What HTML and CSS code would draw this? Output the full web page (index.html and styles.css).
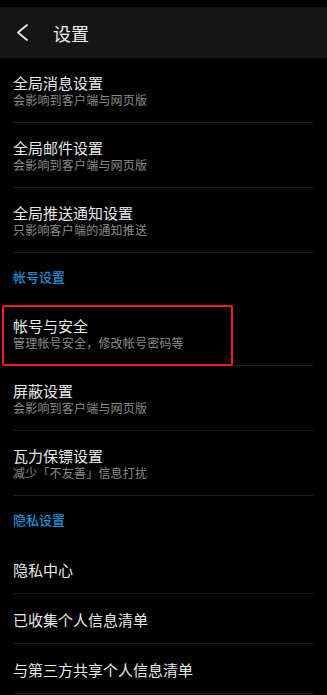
FILE: index.html
```html
<!DOCTYPE html>
<html lang="zh-CN">
<head>
<meta charset="utf-8">
<title>设置</title>
<link rel="stylesheet" href="styles.css">
</head>
<body>
<div class="statusbar"></div>
<header class="header">
  <svg class="back" width="14" height="20" viewBox="0 0 14 20"><polyline points="11,2 2,9.5 11,17" fill="none" stroke="#e6e6e6" stroke-width="1.8" stroke-linecap="round" stroke-linejoin="round"/></svg>
  <span class="title">设置</span>
</header>
<main class="list">
  <div class="item">
    <div class="item-title">全局消息设置</div>
    <div class="item-sub">会影响到客户端与网页版</div>
  </div>
  <div class="item">
    <div class="item-title">全局邮件设置</div>
    <div class="item-sub">会影响到客户端与网页版</div>
  </div>
  <div class="item">
    <div class="item-title">全局推送通知设置</div>
    <div class="item-sub">只影响客户端的通知推送</div>
  </div>
  <div class="section">帐号设置</div>
  <div class="item highlighted">
    <div class="item-title">帐号与安全</div>
    <div class="item-sub">管理帐号安全，修改帐号密码等</div>
    <div class="mark"></div>
  </div>
  <div class="item">
    <div class="item-title">屏蔽设置</div>
    <div class="item-sub">会影响到客户端与网页版</div>
  </div>
  <div class="item">
    <div class="item-title">瓦力保镖设置</div>
    <div class="item-sub">减少「不友善」信息打扰</div>
  </div>
  <div class="section">隐私设置</div>
  <div class="item single">
    <div class="item-title">隐私中心</div>
  </div>
  <div class="item single">
    <div class="item-title">已收集个人信息清单</div>
  </div>
  <div class="item single">
    <div class="item-title">与第三方共享个人信息清单</div>
  </div>
</main>
</body>
</html>
```
FILE: styles.css
```css
* { box-sizing: border-box; }
html, body {
  margin: 0;
  padding: 0;
  background: #000;
}
body {
  width: 327px;
  font-family: "Noto Sans CJK SC", "Noto Sans", sans-serif;
  color: #e8e8e8;
  overflow: hidden;
}
.statusbar {
  height: 7px;
  background: #000;
}
.header {
  height: 51px;
  background: #161616;
  display: flex;
  align-items: center;
}
.back {
  margin-left: 16px;
  display: block;
}
.title {
  margin-left: 23px;
  font-size: 18px;
  line-height: 24px;
  color: #ededed;
}
.list {
  display: flex;
  flex-direction: column;
}
.item {
  position: relative;
  margin: 0 13px;
  height: 65px;
  padding-top: 15px;
  border-bottom: 1px solid #1d1d1d;
}
.item.single {
  height: 50px;
  padding-top: 16px;
}
.item-title {
  font-size: 15px;
  line-height: 20px;
  color: #e8e8e8;
}
.item-sub {
  font-size: 12px;
  line-height: 14px;
  color: #8c8c8c;
  letter-spacing: 0.2px;
}
.section {
  margin: 0 13px;
  height: 48px;
  line-height: 48px;
  font-size: 13px;
  font-weight: 500;
  color: #1b8fd6;
}
.mark {
  position: absolute;
  left: -11px;
  top: 4px;
  width: 231px;
  bottom: -1px;
  border: 2px solid #f21d1d;
  border-radius: 3px;
}
```
